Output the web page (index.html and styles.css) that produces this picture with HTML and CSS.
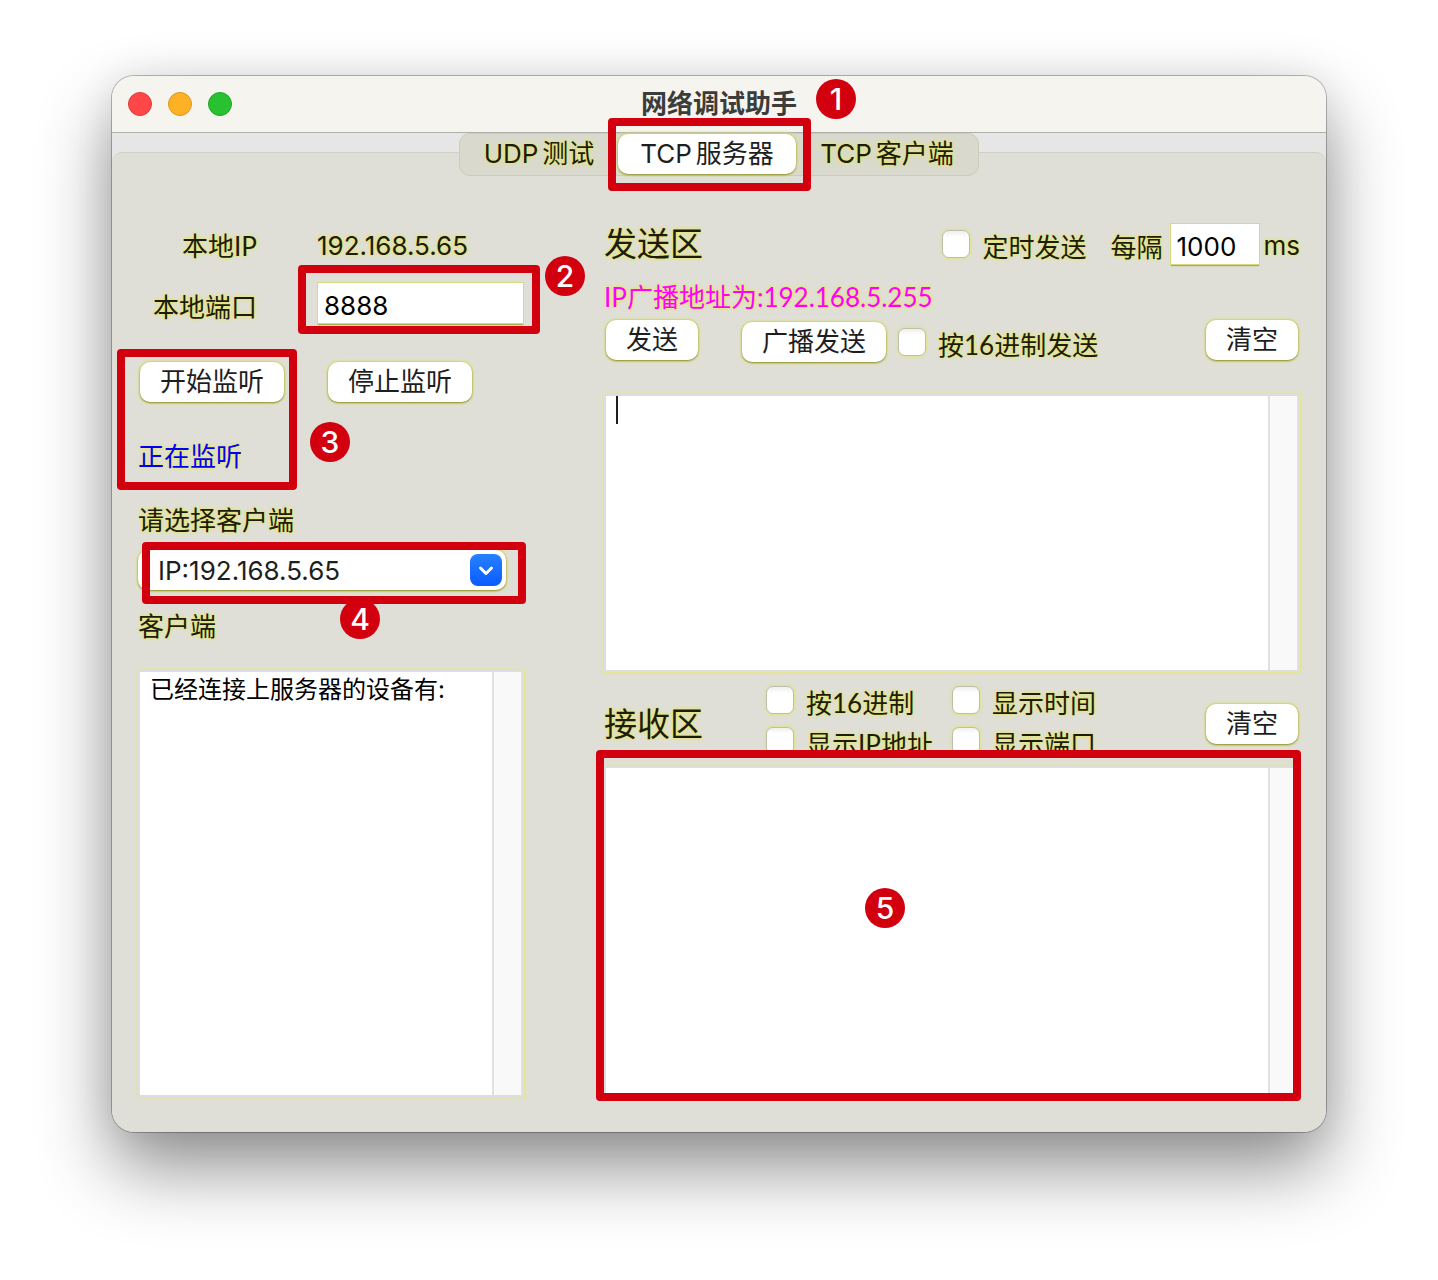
FILE: index.html
```html
<!DOCTYPE html>
<html lang="zh-CN">
<head>
<meta charset="utf-8">
<meta name="viewport" content="width=device-width, initial-scale=1">
<title>网络调试助手</title>
<link rel="stylesheet" href="styles.css">
</head>
<body>
<main class="window">
  <header class="titlebar">
    <div class="lights">
      <button class="light light-close" type="button" aria-label="关闭"></button>
      <button class="light light-min" type="button" aria-label="最小化"></button>
      <button class="light light-max" type="button" aria-label="缩放"></button>
    </div>
    <h1 class="title">网络调试助手</h1>
  </header>

  <div class="pane">
    <nav class="tabs" role="tablist">
      <button class="tab" type="button" role="tab"><span class="latin">UDP</span>测试</button>
      <div class="tab-current">
        <button class="tab tab-on" type="button" role="tab" aria-selected="true"><span class="latin">TCP</span>服务器</button>
        <span class="mark mark-tab"></span>
        <span class="badge badge-1">1</span>
      </div>
      <button class="tab tab-last" type="button" role="tab"><span class="latin">TCP</span>客户端</button>
    </nav>

    <div class="columns">
      <section class="left">
        <div class="fields">
          <span class="label label-ip">本地IP</span>
          <span class="value">192.168.5.65</span>
          <label class="label label-port" for="port">本地端口</label>
          <div class="port-field">
            <input class="input" id="port" type="text" value="8888">
            <span class="mark mark-port"></span>
            <span class="badge badge-2">2</span>
          </div>
        </div>

        <div class="listen">
          <div class="listen-buttons">
            <button class="btn btn-wide" type="button">开始监听</button>
            <button class="btn btn-wide" type="button">停止监听</button>
          </div>
          <p class="status">正在监听</p>
          <span class="mark mark-listen"></span>
          <span class="badge badge-3">3</span>
        </div>

        <label class="line" for="client">请选择客户端</label>
        <div class="picker">
          <select class="select" id="client"><option>IP:192.168.5.65</option></select>
          <svg class="picker-arrow" viewBox="0 0 32 32" aria-hidden="true">
            <defs><linearGradient id="blue" x1="0" y1="0" x2="0" y2="1"><stop offset="0" stop-color="#2680ff"/><stop offset="1" stop-color="#0a5cff"/></linearGradient></defs>
            <rect width="32" height="32" rx="8" fill="url(#blue)"/>
            <path d="M10.5 14 L16 19.5 L21.5 14" fill="none" stroke="#fff" stroke-width="3" stroke-linecap="round" stroke-linejoin="round"/>
          </svg>
          <span class="mark mark-picker"></span>
          <span class="badge badge-4">4</span>
        </div>
        <label class="line line-client" for="devices">客户端</label>
        <textarea class="area area-devices" id="devices">已经连接上服务器的设备有:</textarea>
      </section>

      <section class="right">
        <div class="send-head">
          <h2 class="heading">发送区</h2>
          <label class="check check-timer"><input class="box" type="checkbox"><span class="check-text">定时发送</span></label>
          <label class="every" for="interval">每隔</label>
          <input class="input input-interval" id="interval" type="text" value="1000">
          <span class="unit">ms</span>
        </div>
        <p class="broadcast">IP广播地址为:192.168.5.255</p>
        <div class="send-actions">
          <button class="btn" type="button">发送</button>
          <button class="btn btn-wide btn-cast" type="button">广播发送</button>
          <label class="check check-hex"><input class="box" type="checkbox"><span class="check-text">按16进制发送</span></label>
          <button class="btn btn-clear" type="button">清空</button>
        </div>
        <div class="send-area">
          <textarea class="area" aria-label="发送区"></textarea>
          <span class="caret"></span>
        </div>

        <div class="recv-head">
          <h2 class="heading">接收区</h2>
          <div class="options">
            <label class="check"><input class="box" type="checkbox"><span class="check-text">按16进制</span></label>
            <label class="check"><input class="box" type="checkbox"><span class="check-text">显示时间</span></label>
            <label class="check"><input class="box" type="checkbox"><span class="check-text">显示IP地址</span></label>
            <label class="check"><input class="box" type="checkbox"><span class="check-text">显示端口</span></label>
          </div>
          <button class="btn btn-clear" type="button">清空</button>
        </div>
        <div class="recv-area">
          <textarea class="area" aria-label="接收区"></textarea>
          <span class="mark mark-recv"></span>
          <span class="badge badge-5">5</span>
        </div>
      </section>
    </div>
  </div>
</main>
</body>
</html>
```

FILE: styles.css
```css
* { box-sizing: border-box; }

:root {
  --ui: Inter, "Noto Sans CJK SC", sans-serif;
  --round: Lato, "Noto Sans CJK SC", sans-serif;
  --glow: 0 0 4px #e6e670, 0 0 3px #e6e670, 0 0 2px #e6e670;
  --edge: 0 1px 2px #8f9030, 0 0 3px #c9ca50, 0 0 5px #e6e68c;
  --red: #d2000f;
}

body {
  margin: 0;
  min-height: 100vh;
  padding: 76px 112px 148px;
  display: flex;
  background: #fff;
  color: #1c1c10;
  font: 26px/36px var(--round);
}

h1, h2, p { margin: 0; font-weight: 400; }
button, input, select, textarea { font: inherit; color: inherit; margin: 0; }

.window {
  flex: 1;
  min-width: 0;
  display: flex;
  flex-direction: column;
  border-radius: 22px;
  background: #e6e6e6;
  box-shadow: 0 0 0 1px rgba(0, 0, 0, .26), 0 36px 72px rgba(0, 0, 0, .44), 0 0 40px rgba(0, 0, 0, .08);
}

.titlebar {
  display: grid;
  grid-template-columns: 1fr auto 1fr;
  align-items: center;
  height: 57px;
  padding: 0 16px;
  border-bottom: 1px solid #aeaeaa;
  border-radius: 22px 22px 0 0;
  background: #f5f4ee;
}
.lights { display: flex; gap: 16px; }
.light { width: 24px; height: 24px; padding: 0; border: 1px solid; border-radius: 50%; }
.light-close { background: #ff4747; border-color: #e03c3c; }
.light-min { background: #ffb126; border-color: #dc9620; }
.light-max { background: #28c231; border-color: #1fa328; }
.title { color: #3c3c3a; font: 700 26px/36px var(--ui); }

.pane {
  flex: 1;
  display: flex;
  flex-direction: column;
  margin-top: 19px;
  border-top: 1px solid #cfd0c6;
  border-radius: 10px 10px 22px 22px;
  background: #dfdfd8;
}

.tabs {
  align-self: center;
  display: flex;
  align-items: flex-start;
  height: 43px;
  margin-top: -20px;
  border: 1px solid #cbccbc;
  border-radius: 11px;
  background: #d9dacd;
}
.tab {
  width: 158px;
  height: 40px;
  padding: 0;
  border: 0;
  border-radius: 10px;
  background: none;
  font: 26px/36px var(--ui);
  text-shadow: var(--glow);
  white-space: nowrap;
}
.latin { margin-right: 4px; }
.tab-last { width: 182px; }
.tab-current { position: relative; }
.tab-on {
  display: block;
  width: 178px;
  background: #fff;
  color: #1e1e1e;
  text-shadow: none;
  box-shadow: var(--edge);
}

.columns {
  flex: 1;
  display: grid;
  grid-template-columns: minmax(0, 386fr) minmax(0, 696fr);
  column-gap: 80px;
  padding: 47px 26px 35px;
}
.left, .right { display: flex; flex-direction: column; }

.fields {
  display: grid;
  grid-template-columns: 119px 1fr;
  column-gap: 60px;
  grid-template-rows: 42px 42px;
  row-gap: 18px;
}
.label { text-align: right; text-shadow: var(--glow); }
.label-ip, .value { align-self: center; padding-top: 4px; }
.label-port { align-self: end; }
.value { font-family: var(--ui); text-shadow: var(--glow); }
.port-field { position: relative; margin: 0 1px; }
.input {
  display: block;
  width: 100%;
  height: 40px;
  padding: 5px 6px 0;
  border: 0;
  border-radius: 0;
  background: #fff;
  color: #000;
  font: 26px/36px var(--ui);
  box-shadow: 0 0 0 1px #d8d97c, 0 2px 1px #a9aa55;
}

.listen { position: relative; margin-top: 37px; }
.listen-buttons { display: flex; gap: 44px; padding-left: 2px; }
.btn {
  width: 92px;
  height: 40px;
  padding: 0 0 2px;
  border: 0;
  border-radius: 10px;
  background: #fff;
  color: #1e1e1e;
  box-shadow: var(--edge);
  white-space: nowrap;
}
.btn-wide { width: 144px; }
.status { margin-top: 36px; color: #0000fa; text-shadow: var(--glow); }
.line { margin-top: 28px; text-shadow: var(--glow); }
.line-client { margin-top: 18px; }

.picker { position: relative; width: 368px; margin-top: 12px; }
.select {
  display: block;
  width: 100%;
  height: 40px;
  padding: 2px 48px 0 20px;
  border: 0;
  border-radius: 10px;
  appearance: none;
  background: #fff;
  color: #1e1e1e;
  font: 26px/36px var(--ui);
  box-shadow: var(--edge);
}
.picker-arrow { position: absolute; top: 4px; right: 4px; width: 32px; height: 32px; pointer-events: none; }

.area {
  display: block;
  flex: 1;
  width: 100%;
  padding: 0 40px 0 10px;
  border: 2px solid #dedee0;
  border-radius: 0;
  outline: 0;
  resize: none;
  background: linear-gradient(to left, #e2e2e2 1px, #f9f9f9 1px, #f9f9f9 28px, #e0e0e0 28px, #e0e0e0 30px, #fff 30px);
  box-shadow: 0 0 2px 1px #e8e878;
  color: #000;
  font: 24px/36px var(--ui);
}
.area-devices { margin-top: 26px; }

.send-head { display: flex; align-items: center; height: 42px; }
.heading { font: 33px/42px var(--round); padding-bottom: 2px; text-shadow: var(--glow); }
.check { display: flex; align-items: center; gap: 12px; white-space: nowrap; text-shadow: var(--glow); }
.check-text { padding-top: 6px; }
.box {
  appearance: none;
  flex: none;
  width: 28px;
  height: 28px;
  margin: 0;
  border: 1px solid #bcbdb4;
  border-radius: 7px;
  background: linear-gradient(#f0f0f0, #fff 6px);
  box-shadow: 0 0 3px 1px #e2e380;
}
.check-timer { margin-left: auto; }
.every { margin: 6px 8px 0 24px; text-shadow: var(--glow); }
.input-interval { width: 88px; }
.unit { margin: 4px 0 0 5px; font-family: var(--ui); text-shadow: var(--glow); }

.broadcast { margin-top: 14px; color: #ff00ff; text-shadow: var(--glow); }
.send-actions { display: flex; align-items: flex-start; height: 42px; margin-top: 5px; padding: 0 2px; }
.btn-cast { align-self: flex-end; margin-left: 44px; }
.check-hex { margin: 1px 0 0 12px; }
.btn-clear { margin-left: auto; }

.send-area { position: relative; display: flex; height: 278px; margin-top: 32px; }
.caret { position: absolute; top: 2px; left: 12px; width: 2px; height: 28px; background: #1e1e1e; }

.recv-head { display: flex; align-items: center; height: 76px; margin-top: 14px; margin-bottom: 4px; padding-right: 2px; }
.recv-head .btn, .recv-head .heading { flex: none; }
.options {
  align-self: stretch;
  display: grid;
  grid-template-columns: 186px auto;
  grid-auto-rows: 28px;
  row-gap: 13px;
  margin-left: 63px;
}

.recv-area { position: relative; flex: 1; display: flex; }

/* Numbered callouts over the controls */
.mark { position: absolute; border: 8px solid var(--red); border-radius: 4px; pointer-events: none; }
.mark-tab { top: -16px; left: -10px; right: -15px; bottom: -17px; }
.mark-port { top: -18px; left: -20px; right: -17px; bottom: -9px; }
.mark-listen { top: -13px; left: -21px; width: 180px; bottom: -16px; }
.mark-picker { top: -8px; left: 4px; right: -20px; bottom: -14px; }
.mark-recv { top: -16px; left: -8px; right: -1px; bottom: -4px; }
.badge {
  position: absolute;
  width: 40px;
  height: 40px;
  border-radius: 50%;
  background: var(--red);
  color: #fff;
  font: 500 30px/40px var(--ui);
  text-align: center;
  pointer-events: none;
}
.badge-1 { top: -55px; right: -60px; }
.badge-2 { top: -27px; right: -62px; }
.badge-3 { top: 60px; left: 172px; }
.badge-4 { top: 49px; left: 202px; }
.badge-5 { top: 122px; left: 261px; }
```
